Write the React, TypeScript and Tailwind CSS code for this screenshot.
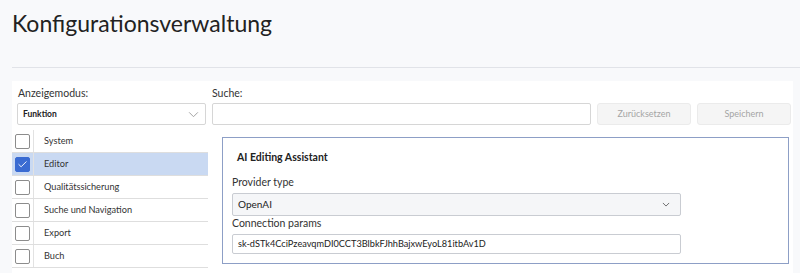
import { Check } from "lucide-react";

const rows = [
  { label: "System", checked: false },
  { label: "Editor", checked: true },
  { label: "Qualitätssicherung", checked: false },
  { label: "Suche und Navigation", checked: false },
  { label: "Export", checked: false },
  { label: "Buch", checked: false },
];

function Chevron({ className }: { className?: string }) {
  return (
    <svg viewBox="0 0 12 8" className={className} fill="none">
      <path d="M1 1.5 6 6.5 11 1.5" stroke="currentColor" strokeWidth="1.1" />
    </svg>
  );
}

export default function App() {
  return (
    <div className="w-[800px] h-[273px] overflow-hidden bg-[#f8f9fb] font-['Lato',sans-serif] text-[#333]">
      {/* Header */}
      <h1 className="pl-[12px] pt-[7px] text-[23px] leading-[32px] font-normal text-[#222]">
        Konfigurationsverwaltung
      </h1>
      <div className="ml-[12px] mt-[28px] h-px bg-[#e1e3e8]" />

      {/* Main panel */}
      <div className="ml-[12px] mr-[7px] mt-[13px] bg-white h-[200px]">
        {/* Filter bar */}
        <div className="flex gap-[6px] pl-[5px] pt-[4px]">
          <div className="w-[189px]">
            <div className="text-[10.5px] leading-[16px] mb-[2px] pl-[1px]">Anzeigemodus:</div>
            <div className="h-[22px] border border-[#d6d6d6] rounded-[2px] flex items-center justify-between pl-[5px] pr-[6px]">
              <span className="text-[8.5px] font-bold text-[#222]">Funktion</span>
              <Chevron className="w-[11px] h-[7px] text-[#a0a0a0]" />
            </div>
          </div>
          <div className="w-[379px]">
            <div className="text-[10.5px] leading-[16px] mb-[2px]">Suche:</div>
            <div className="h-[22px] border border-[#d6d6d6] rounded-[2px]" />
          </div>
          <div className="flex gap-[6px] pt-[18px]">
            <button className="w-[94px] h-[22px] bg-[#f5f5f5] border border-[#ebebeb] rounded-[3px] text-[9px] text-[#a5a5a5]">
              Zurücksetzen
            </button>
            <button className="w-[94px] h-[22px] bg-[#f5f5f5] border border-[#ebebeb] rounded-[3px] text-[9px] text-[#a5a5a5]">
              Speichern
            </button>
          </div>
        </div>

        {/* Body */}
        <div className="flex gap-[14px] mt-[5px]">
          <div className="w-[196px]">
            {rows.map((r) => (
              <div
                key={r.label}
                className={`flex h-[23px] border-b border-[#dedede] ${r.checked ? "bg-[#c9d9f2]" : ""}`}
              >
                <div className="w-[22px] border-r border-[#e2e2e2] flex items-center justify-center">
                  <div
                    className={`w-[15px] h-[15px] rounded-[2px] border flex items-center justify-center ${
                      r.checked ? "bg-[#3a6bd2] border-[#3a6bd2]" : "bg-white border-[#8c8c8c]"
                    }`}
                  >
                    {r.checked && <Check className="w-[11px] h-[11px] text-white" strokeWidth={2} />}
                  </div>
                </div>
                <div className="flex items-center pl-[10px] text-[9.2px] text-[#333]">{r.label}</div>
              </div>
            ))}
          </div>

          <div className="mt-[7px] w-[567px] h-[127px] border border-[#8d9fc6] pt-[11px] pl-[9px]">
            <div className="pl-[5px] text-[10.5px] leading-[16px] font-bold text-[#222]">AI Editing Assistant</div>
            <div className="mt-[10px] text-[10.5px] leading-[14px] mb-[4px]">Provider type</div>
            <div className="w-[449px] h-[23px] bg-[#f5f6f8] border border-[#c9ccd2] rounded-[2px] flex items-center justify-between pl-[5px] pr-[10px]">
              <span className="text-[10px] text-[#222]">OpenAI</span>
              <Chevron className="w-[8px] h-[5px] text-[#333]" />
            </div>
            <div className="text-[10.5px] leading-[14px] mb-[4px]">Connection params</div>
            <div className="w-[449px] h-[20px] border border-[#c9ccd2] rounded-[2px] flex items-center pl-[5px] text-[9.2px] text-[#222]">
              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
            </div>
          </div>
        </div>
      </div>
    </div>
  );
}
